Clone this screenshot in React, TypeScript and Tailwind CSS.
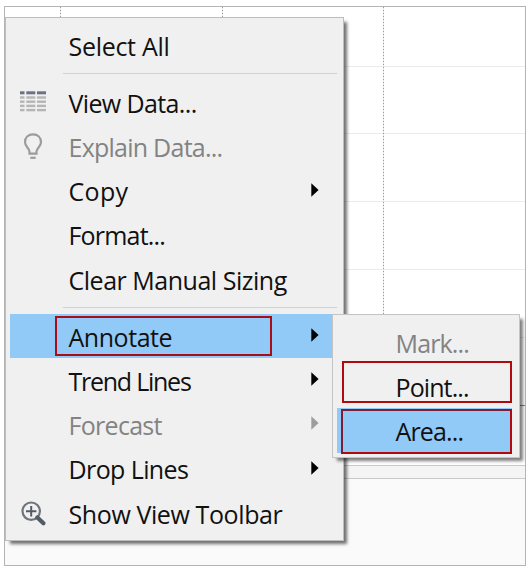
import React from "react";

type Item = {
  label: string;
  tracking: string;
  disabled?: boolean;
  arrow?: boolean;
  active?: boolean;
  icon?: React.ReactNode;
};

function TableIcon() {
  const xs = [
    [0, 4.5],
    [6.3, 9],
    [17, 9],
  ];
  return (
    <svg width="27" height="22" viewBox="0 0 27 22">
      {[0, 5, 9.2, 13.4, 17.6].map((y, r) =>
        xs.map(([x, w]) => (
          <rect key={`${x}-${y}`} x={x} y={y + 0.3} width={w} height={r ? 2.4 : 3} fill={r ? "#b5b5b5" : "#6c7286"} />
        )),
      )}
    </svg>
  );
}

function BulbIcon() {
  return (
    <svg width="20" height="27" viewBox="0 0 20 27" fill="none" stroke="#9c9c9c" strokeWidth="2.2">
      <path d="M6.5 20.6V18.5C6.5 15.5 2 13.5 2 9.2C2 4.5 5.3 1.4 10 1.4S18 4.5 18 9.2C18 13.5 13.5 15.5 13.5 18.5V20.6Z" />
      <path d="M7.3 24.8H12.7" strokeWidth="2.2" />
    </svg>
  );
}

function ZoomIcon() {
  return (
    <svg width="25" height="25" viewBox="0 0 25 25" fill="none" stroke="#555b65" className="mt-[2px]">
      <circle cx="10.2" cy="10.2" r="8.7" stroke="#71757b" strokeWidth="2.2" />
      <path d="M10.2 5V15.4M5 10.2H15.4" strokeWidth="2" />
      <path d="M16.4 16.4L22.4 22.2" strokeWidth="4.2" strokeLinecap="round" />
    </svg>
  );
}

const groups: Item[][] = [
  [{ label: "Select All", tracking: "tracking-[-0.3px]" }],
  [
    { label: "View Data...", tracking: "tracking-[-0.63px]", icon: <TableIcon /> },
    { label: "Explain Data...", tracking: "tracking-[-0.75px]", disabled: true, icon: <BulbIcon /> },
    { label: "Copy", tracking: "tracking-[0.3px]", arrow: true },
    { label: "Format...", tracking: "tracking-[-0.8px]" },
    { label: "Clear Manual Sizing", tracking: "tracking-[-0.48px]" },
  ],
  [
    { label: "Annotate", tracking: "tracking-[-0.45px]", arrow: true, active: true },
    { label: "Trend Lines", tracking: "tracking-[-1.25px]", arrow: true },
    { label: "Forecast", tracking: "tracking-[-0.7px]", arrow: true, disabled: true },
    { label: "Drop Lines", tracking: "tracking-[-0.6px]", arrow: true },
    { label: "Show View Toolbar", tracking: "tracking-[-0.4px]", icon: <ZoomIcon /> },
  ],
];

const submenu: Item[] = [
  { label: "Mark...", tracking: "tracking-[-0.85px]", disabled: true },
  { label: "Point...", tracking: "tracking-[-0.9px]" },
  { label: "Area...", tracking: "tracking-[-0.85px]", active: true },
];

function MenuRow({ item }: { item: Item }) {
  return (
    <div className={`flex h-[44.2px] items-center pr-[13px] ${item.active ? "bg-[#91c9f7]" : ""} ${item.disabled ? "text-[#838383]" : "text-[#111]"}`}>
      <div className="flex w-[46px] shrink-0 justify-center">{item.icon}</div>
      <span className={`ml-[12.5px] grow whitespace-nowrap pt-[1.5px] leading-[36px] ${item.tracking}`}>{item.label}</span>
      {item.arrow && (
        <svg width="8" height="14" viewBox="0 0 8 14" className={`-mt-[2px] mr-[5px] ${item.disabled ? "text-[#9d9d9d]" : "text-black"}`}>
          <path d="M0.3 0.3L7.6 7L0.3 13.7Z" fill="currentColor" />
        </svg>
      )}
    </div>
  );
}

function Chart() {
  const dots = "w-px bg-[repeating-linear-gradient(to_bottom,#999_0,#999_1px,#e8e8e8_1px,#e8e8e8_3px)]";
  return (
    <div className="relative flex h-[560px] w-[522px] flex-col border border-[#b4b4b4] bg-white">
      <div className="h-[60px] border-b border-[#ececec]" />
      <div className="h-[67px] border-b border-[#ececec]" />
      <div className="h-[68px] border-b border-[#ececec]" />
      <div className="h-[68px] border-b border-[#ececec]" />
      <div className="h-[68px] border-b border-[#ececec]" />
      <div className="h-[68px] border-b border-[#858585]" />
      <div className="h-[60px] border-b border-[#c9c9c9]" />
      <div className="h-[13px] border-b border-[#c9c9c9] bg-[#f4f4f4]" />
      <div className="grow bg-[#fafafa]" />
      <div className="absolute left-[55px] top-0 flex h-[398px] w-[324px] justify-between">
        <div className={dots} />
        <div className={dots} />
        <div className={dots} />
      </div>
    </div>
  );
}

export default function App() {
  return (
    <div className="relative h-[570px] w-[528px] overflow-hidden bg-white pl-1 pt-1.5 font-['Open_Sans','Noto_Sans',sans-serif] text-[25px]">
      <Chart />
      <div className="absolute left-[5px] top-[17px] h-[524px] w-[339px] border border-[#bdbdbd] bg-[#f0f0f0] py-[5px] pl-[4px] pr-[6px] shadow-[4px_4px_3px_-1px_rgba(0,0,0,0.55)]">
        {groups.map((group, i) => (
          <div key={i}>
            {i > 0 && <div className="mb-[6px] ml-[53px] mt-[5.5px] h-[1.4px] bg-[#d2d2d2]" />}
            {group.map((item) => (
              <MenuRow key={item.label} item={item} />
            ))}
          </div>
        ))}
      </div>
      <div className="absolute left-[332px] top-[314px] h-[144px] w-[188px] border border-[#c4c4c4] bg-[#f0f0f0] pb-[4px] pl-[4px] pr-[7px] pt-[5px] shadow-[4px_4px_3px_-1px_rgba(0,0,0,0.5)]">
        {submenu.map((item) => (
          <MenuRow key={item.label} item={item} />
        ))}
      </div>
      <div className="absolute left-[55px] top-[316px] h-[40px] w-[217px] border-2 border-[#a80d18]" />
      <div className="absolute left-[342px] top-[361px] h-[42px] w-[170px] border-2 border-[#b00a0e]" />
      <div className="absolute left-[341px] top-[409px] h-[45px] w-[171px] border-2 border-[#b00a0e] border-l-[#7c1e38] border-t-[#7c1e38]" />
    </div>
  );
}
